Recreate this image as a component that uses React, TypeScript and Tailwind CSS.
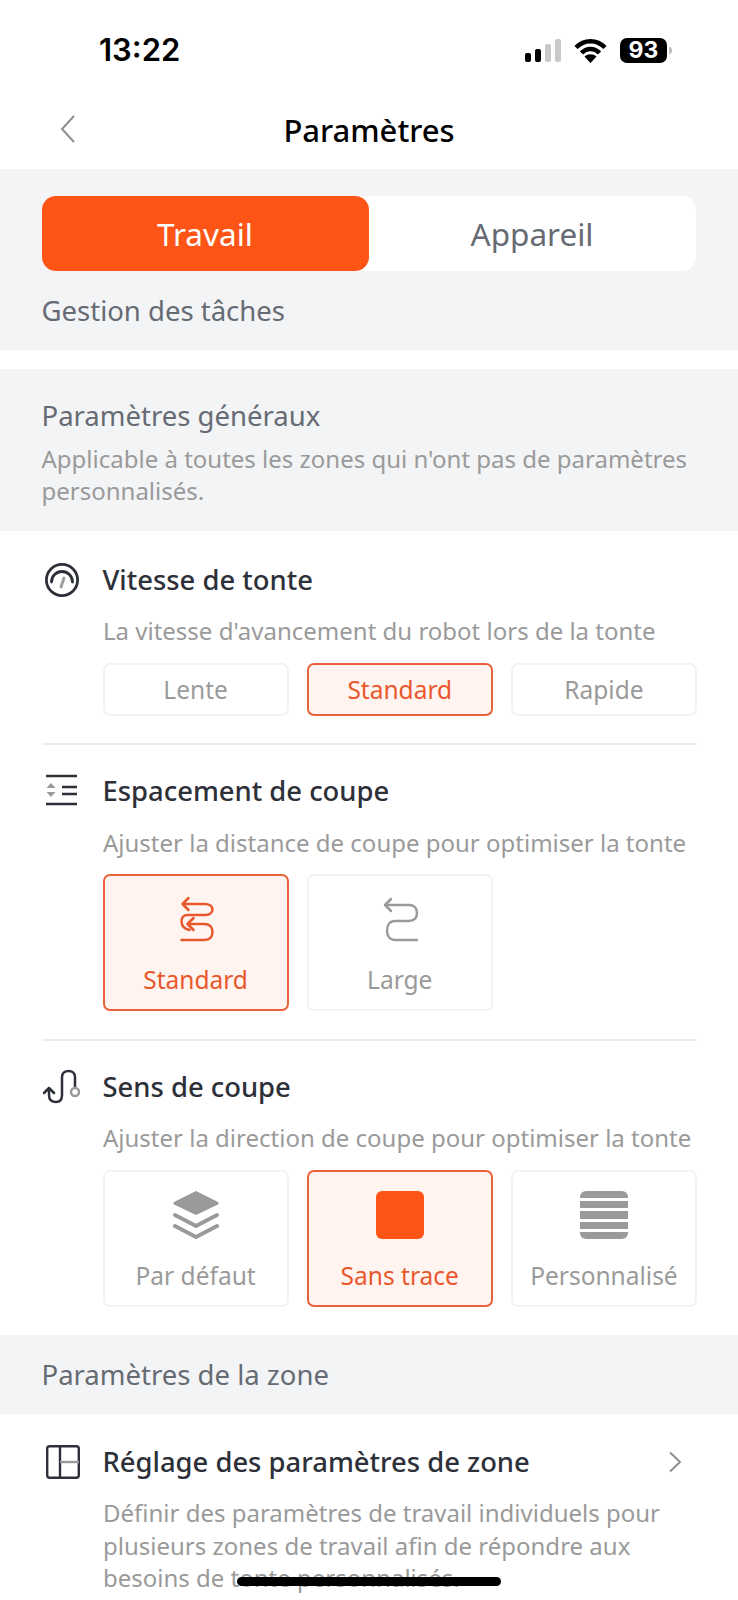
import type { ReactNode } from "react";

function GaugeIcon() {
  return (
    <svg className="ml-[2.5px]" width="36" height="36" viewBox="9 5 36 36" fill="none" strokeLinecap="round">
      <circle cx="27" cy="23" r="15.6" stroke="#2d3038" strokeWidth="2.8" />
      <path d="M16.5 25a10.5 10.5 0 0 1 21 0" stroke="#2d3038" strokeWidth="2.8" />
      <path d="M26 30l3-9" stroke="#9a9a9a" strokeWidth="2.8" />
    </svg>
  );
}

function SpacingIcon() {
  return (
    <svg className="ml-[1px]" width="36" height="36" viewBox="0 0 36 36" fill="none">
      <path d="M3 3h31M19 14h15M19 21h15M3 31h31" stroke="#2d3038" strokeWidth="2.4" />
      <path d="M8 10l4.500 5h-9zM8 24l4.500-5h-9z" fill="#9a9a9a" />
    </svg>
  );
}

function DirectionIcon() {
  return (
    <svg className="ml-[1px]" width="37" height="36" viewBox="8 9 37 36" fill="none" strokeLinecap="round" strokeLinejoin="round">
      <path
        d="M9 33l5-5 5 5M14 28v7c0 5 3 7 7 7s6-3 6-7V17c0-4 3-6 6.500-6S40 13 40 17v10"
        stroke="#2d3038"
        strokeWidth="2.5"
      />
      <circle cx="40" cy="32" r="4" stroke="#9a9a9a" strokeWidth="2.5" />
    </svg>
  );
}

function ZoneIcon() {
  return (
    <svg className="ml-[4px]" width="34" height="34" viewBox="0 0 34 34" fill="none">
      <rect x="1.2" y="1.2" width="31.6" height="31.6" rx="2.5" stroke="#2d3038" strokeWidth="2.4" />
      <path d="M14 1v32" stroke="#2d3038" strokeWidth="2.4" />
      <path d="M14 17h19" stroke="#9a9a9a" strokeWidth="2.4" />
    </svg>
  );
}

function NarrowIcon() {
  return (
    <svg width="60" height="60" viewBox="-3.5 -2 60 60" fill="none" stroke="#e9582c" strokeWidth="2.5" strokeLinecap="round" strokeLinejoin="round">
      <path d="M19 7l-6 6 6 6M13 13h22c5 0 8 2.500 8 5.500S40 24 35 24H18c-4 0-6 3-6 6 0 5 3 8 8 9" />
      <path d="M24 27l-6 6 6 6M18 33h17c5 0 8 3 8 8s-3 8-8 8H12" />
    </svg>
  );
}

function WideIcon() {
  return (
    <svg width="60" height="60" viewBox="-5 -2 60 60" fill="none" stroke="#9a9a9a" strokeWidth="2.5" strokeLinecap="round" strokeLinejoin="round">
      <path d="M16 8l-6 6 6 6M10 14h24c5 0 8 3 8 8s-3 8-8 8H20c-5 0-8 4-8 9.500S15 49 20 49h22" />
    </svg>
  );
}

function LayersIcon() {
  return (
    <svg width="48" height="48" viewBox="0 0 48 48" fill="none">
      <path d="M24 0l22 11a1.500 1.500 0 0 1 0 2.500L24 24 2 13.500A1.500 1.500 0 0 1 2 11z" fill="#9a9a9a" />
      <path d="M3 24l21 11 21-11" stroke="#9a9a9a" strokeWidth="4" strokeLinecap="round" strokeLinejoin="round" />
      <path d="M3 35l21 11 21-11" stroke="#9a9a9a" strokeWidth="4" strokeLinecap="round" strokeLinejoin="round" />
    </svg>
  );
}

function StripesIcon() {
  return (
    <div className="flex h-12 w-12 flex-col gap-[3px] overflow-hidden rounded-[6px]">
      <div className="h-[7.2px] bg-[#9a9a9a]" />
      <div className="h-[7.2px] bg-[#9a9a9a]" />
      <div className="h-[7.2px] bg-[#9a9a9a]" />
      <div className="h-[7.2px] bg-[#9a9a9a]" />
      <div className="h-[7.2px] bg-[#9a9a9a]" />
    </div>
  );
}

function Option({ label, selected, icon }: { label: string; selected?: boolean; icon?: ReactNode }) {
  const colors = selected ? "border-[#e8613a] bg-[#fff4f0] text-[#e9582c]" : "border-[#f3f3f3] bg-white text-[#9a9a9a]";
  if (!icon) {
    return (
      <div className={`flex h-[53px] items-center justify-center rounded-[7px] border-2 text-[24.5px] leading-[32px] ${colors}`}>{label}</div>
    );
  }
  return (
    <div className={`flex h-[137px] flex-col items-center rounded-[7px] border-2 pt-[13px] text-[24.5px] ${colors}`}>
      <div className="flex h-[60px] items-center justify-center">{icon}</div>
      <span className="mt-[15px] leading-[32px]">{label}</span>
    </div>
  );
}

function SettingHeader({ icon, title }: { icon: ReactNode; title: string }) {
  return (
    <div className="flex h-[38px] items-center">
      <div className="flex w-[61px] shrink-0 items-center">{icon}</div>
      <span className="text-[27.4px] font-medium leading-[38px] text-[#2d3038]">{title}</span>
    </div>
  );
}

function Hint({ children, className }: { children: ReactNode; className: string }) {
  return <p className={`ml-[61.5px] text-[24px] leading-[36px] text-[#9a9a9a] ${className}`}>{children}</p>;
}

export default function App() {
  return (
    <div className="relative h-[1600px] w-[738px] overflow-hidden bg-white font-['Noto_Sans',sans-serif]">
      {/* Status bar */}
      <div className="flex h-[92px] items-start justify-between pl-[99px] pr-[66px] pt-[32px]">
        <span className="font-['Inter',sans-serif] text-[31px] font-semibold leading-[36px] text-black">13:22</span>
        <div className="flex items-center pt-[6px]">
          <div className="flex items-end gap-1">
            <div className="h-[9px] w-[6px] rounded-[2px] bg-black" />
            <div className="h-[13px] w-[6px] rounded-[2px] bg-black" />
            <div className="h-[18px] w-[6px] rounded-[2px] bg-[#c9c9c9]" />
            <div className="h-[23px] w-[6px] rounded-[2px] bg-[#c9c9c9]" />
          </div>
          <svg className="ml-[13px]" width="33" height="25" viewBox="0 0 33 25" fill="none">
            <path d="M2 9.500C10 1 23 1 31 9.500" stroke="#000" strokeWidth="4.5" />
            <path d="M7.500 15C12.500 9.500 20.500 9.500 25.500 15" stroke="#000" strokeWidth="4.5" />
            <path d="M16.500 25l-6-6.500c3.500-3 8.500-3 12 0z" fill="#000" />
          </svg>
          <div className="ml-[13px] flex h-[25px] w-[47px] items-center justify-center rounded-[7px] bg-black font-['Inter',sans-serif] text-[23px] font-bold leading-none text-white">
            93
          </div>
          <div className="ml-[2px] h-[7px] w-[3px] rounded-r-full bg-[#bdbdbd]" />
        </div>
      </div>

      {/* Nav bar */}
      <div className="relative flex h-[77px] items-center justify-center pb-[2px]">
        <svg className="absolute left-[59px] top-[22px]" width="18" height="30" viewBox="0 0 18 30" fill="none">
          <path d="M15 2L3 15l12 13" stroke="#8b8e93" strokeWidth="2" />
        </svg>
        <span className="text-[31px] font-medium leading-[40px] text-black">Paramètres</span>
      </div>

      {/* Tabs */}
      <section className="h-[181px] bg-[#f3f4f6] px-[41.5px] pt-[27px]">
        <div className="flex h-[75px] w-[654px] rounded-[14px] bg-white">
          <div className="flex w-[327px] items-center justify-center rounded-[14px] bg-[#fe5516] pt-[1px] text-[31.5px] text-white">Travail</div>
          <div className="flex flex-1 items-center justify-center pt-[1px] text-[31.5px] text-[#666b73]">Appareil</div>
        </div>
        <p className="mt-[22px] text-[27.5px] leading-[36px] text-[#666b73]">Gestion des tâches</p>
      </section>

      {/* General heading */}
      <section className="mt-[19px] h-[162px] bg-[#f3f4f6] px-[41.5px] pt-[28px]">
        <p className="text-[27.5px] leading-[38px] text-[#666b73]">Paramètres généraux</p>
        <p className="mt-[8px] text-[24px] leading-[32px] text-[#9a9a9a]">
          Applicable à toutes les zones qui n'ont pas de paramètres
          <br />
          personnalisés.
        </p>
      </section>

      {/* General settings */}
      <section className="pb-[28px] pl-[41.5px] pr-[41px] pt-[30px]">
        <SettingHeader icon={<GaugeIcon />} title="Vitesse de tonte" />
        <Hint className="mt-[14px]">La vitesse d'avancement du robot lors de la tonte</Hint>
        <div className="ml-[61px] mt-[14px] grid grid-cols-3 gap-[18px]">
          <Option label="Lente" />
          <Option label="Standard" selected />
          <Option label="Rapide" />
        </div>
        <div className="mb-[27px] mt-[27px] h-[2px] bg-[#ececec]" />

        <SettingHeader icon={<SpacingIcon />} title="Espacement de coupe" />
        <Hint className="mt-[15px]">Ajuster la distance de coupe pour optimiser la tonte</Hint>
        <div className="ml-[61px] mt-[13px] grid grid-cols-3 gap-[18px]">
          <Option label="Standard" selected icon={<NarrowIcon />} />
          <Option label="Large" icon={<WideIcon />} />
        </div>
        <div className="mb-[27px] mt-[28px] h-[2px] bg-[#ececec]" />

        <SettingHeader icon={<DirectionIcon />} title="Sens de coupe" />
        <Hint className="mt-[14px]">Ajuster la direction de coupe pour optimiser la tonte</Hint>
        <div className="ml-[61px] mt-[14px] grid grid-cols-3 gap-[18px]">
          <Option label="Par défaut" icon={<LayersIcon />} />
          <Option label="Sans trace" selected icon={<div className="h-12 w-12 rounded-[6px] bg-[#fe5516]" />} />
          <Option label="Personnalisé" icon={<StripesIcon />} />
        </div>
      </section>

      {/* Zone heading */}
      <section className="flex h-[79px] items-center bg-[#f3f4f6] px-[41.5px]">
        <p className="text-[27.5px] leading-[38px] text-[#666b73]">Paramètres de la zone</p>
      </section>

      {/* Zone settings */}
      <section className="px-[41.5px] pt-[29px]">
        <div className="flex items-center justify-between pr-[15px]">
          <SettingHeader icon={<ZoneIcon />} title="Réglage des paramètres de zone" />
          <svg width="14" height="22" viewBox="0 0 14 22" fill="none">
            <path d="M2 1.500L12 11 2 20.500" stroke="#8b8e93" strokeWidth="2" />
          </svg>
        </div>
        <p className="ml-[61.5px] mt-[16px] text-[24px] leading-[32.6px] text-[#9a9a9a]">
          Définir des paramètres de travail individuels pour
          <br />
          plusieurs zones de travail afin de répondre aux
          <br />
          besoins de tonte personnalisés.
        </p>
      </section>

      {/* Home indicator */}
      <div className="absolute left-[237px] top-[1577px] h-[9px] w-[264px] rounded-full bg-black" />
    </div>
  );
}
